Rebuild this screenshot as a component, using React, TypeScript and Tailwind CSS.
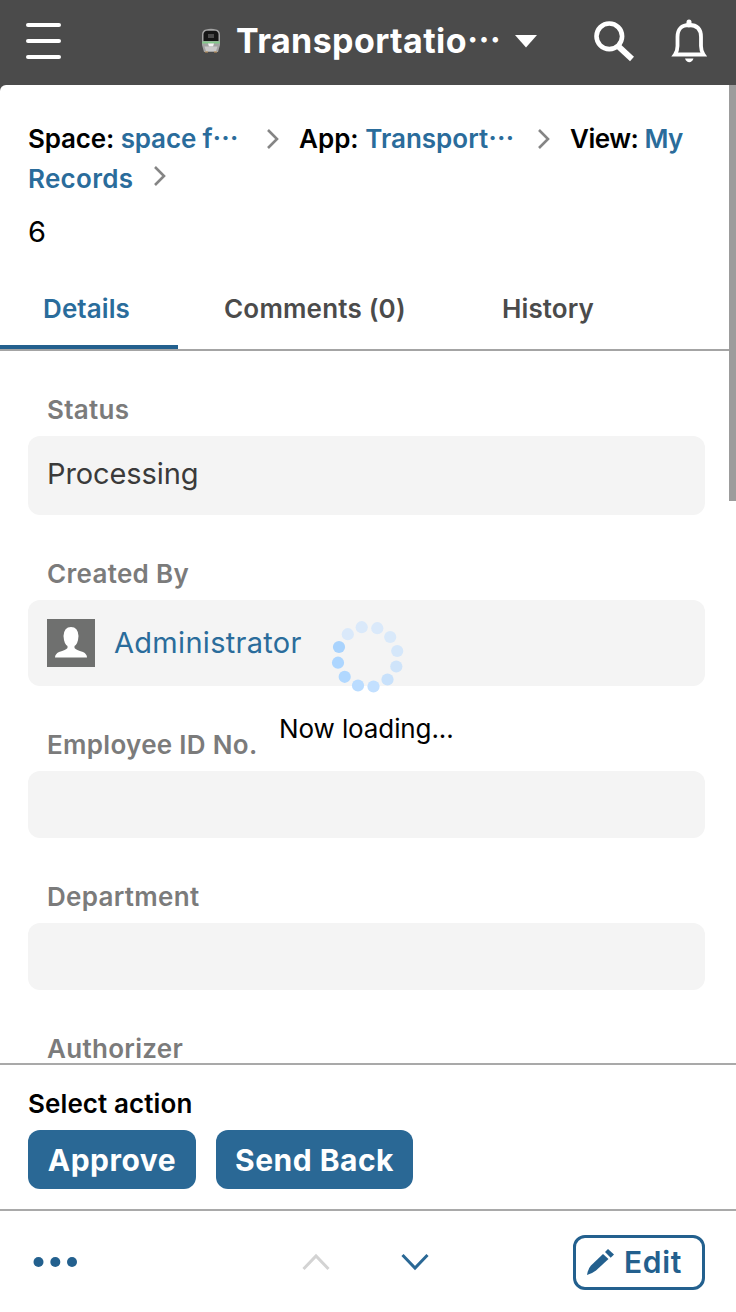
import type { ReactNode } from "react";

interface FieldProps {
      label: string;
      boxClass: string;
      children?: ReactNode;
}

// dot positions start at the brightest one and go counter-clockwise
const dots = [
      { x: 79, y: 47, color: "#a9d3fd" },
      { x: 78, y: 62.7, color: "#add6ff" },
      { x: 84.7, y: 76.8, color: "#b1d8ff" },
      { x: 98, y: 85.5, color: "#badcff" },
      { x: 113.5, y: 86.5, color: "#c3e0ff" },
      { x: 127.5, y: 79.5, color: "#c8e1fb" },
      { x: 136.3, y: 66.5, color: "#cfe4fa" },
      { x: 137.2, y: 51, color: "#d5e7fa" },
      { x: 130.2, y: 37, color: "#d9e9fa" },
      { x: 117.3, y: 28.2, color: "#dae9fa" },
      { x: 101.7, y: 27.2, color: "#dae9fa" },
      { x: 87.8, y: 34.2, color: "#dae9fa" },
];

const Ellipsis = () => (
      <span lang="ja" className="font-['Noto_Sans_CJK_JP',sans-serif] leading-none font-bold">
            …
      </span>
);

const TrainIcon = () => (
      <svg width="20" height="26" viewBox="0 0 20 26" className="shrink-0">
            <path d="M1 7Q1 2 5 1.5Q10 .2 15 1.5Q19 2 19 7V17L17 24H3L1 17Z" fill="#a3a3a3" />
            <path d="M2.5 6Q3 3 6 2.7H14Q17 3 17.5 6V13H2.5Z" fill="#151515" />
            <path d="M7 6H13V10H7Z" fill="#4a4a4a" />
            <path d="M1.2 13.5H18.8V15.5H1.2Z" fill="#83c98b" />
            <path d="M7 15.5H13L12 18.5H8Z" fill="#f4f4f4" />
            <path d="M3.5 18.5H16.5L15 23H5Z" fill="#c9c9c9" />
            <path d="M4 24H7M13 24H16" stroke="#c99a5f" strokeWidth="1.2" />
      </svg>
);

const Chevron = ({ className = "" }: { className?: string }) => (
      <svg width="14" height="22" viewBox="0 0 14 22" fill="none" className={`shrink-0 ${className}`}>
            <path d="M2 2L11 11L2 20" stroke="#858585" strokeWidth="2.6" />
      </svg>
);

const Field = ({ label, boxClass, children }: FieldProps) => (
      <div className="pt-10">
            <div className="mb-[7px] ml-[19px] h-[38px] text-[26px] leading-[38px] font-semibold tracking-[0.3px] text-[#7b7b7b]">
                  {label}
            </div>
            <div className={`flex rounded-xl bg-[#f4f4f4] px-[19px] ${boxClass}`}>{children}</div>
      </div>
);

const Header = () => (
      <header className="flex h-[85px] shrink-0 items-center bg-[#4b4b4b] text-white">
            <div className="mb-[3px] ml-[26px] flex flex-col gap-3">
                  <span className="h-1 w-[35px] rounded-sm bg-white" />
                  <span className="h-1 w-[35px] rounded-sm bg-white" />
                  <span className="h-1 w-[35px] rounded-sm bg-white" />
            </div>
            <div className="mb-1 ml-[140px] flex w-[336px] items-center">
                  <TrainIcon />
                  <h1 className="mt-px ml-[15px] w-[279px] text-[34px] leading-[50px] font-bold tracking-[0.4px] whitespace-nowrap">
                        Transportatio<Ellipsis />
                  </h1>
                  <svg width="22" height="13" viewBox="0 0 22 13" className="mt-0.5 shrink-0">
                        <path d="M0 0H22L11 12.5Z" fill="#fff" />
                  </svg>
            </div>
            <svg width="42" height="42" viewBox="0 0 42 42" fill="none" className="mb-0.5 ml-[56px]" stroke="#fff">
                  <circle cx="16.3" cy="15.3" r="12.8" strokeWidth="4.6" />
                  <path d="M25 25L39 38" strokeWidth="5.8" />
            </svg>
            <svg width="36" height="44" viewBox="0 0 36 44" fill="none" className="mb-[3px] ml-[36px]">
                  <path d="M18 3V6" stroke="#fff" strokeWidth="5" strokeLinecap="round" />
                  <path d="M6.5 27V18Q6.5 6 18.3 6Q30 6 30 18V27Q30 32 32.5 35.5H4Q6.5 32 6.5 27Z" stroke="#fff" strokeWidth="3.8" />
                  <path d="M14 39.5H22.5Q21 43.3 18.3 43.3Q15.5 43.3 14 39.5Z" fill="#fff" />
            </svg>
      </header>
);

const Breadcrumb = () => (
      <nav className="ml-7 flex h-[78px] flex-col text-[26px] leading-[39px] font-semibold whitespace-nowrap">
            <div className="flex h-[39px] items-center">
                  <div className="h-[39px] w-[238px] tracking-[-0.15px]">
                        Space: <span className="text-[#2a6c9b]">space f<Ellipsis /></span>
                  </div>
                  <Chevron />
                  <div className="ml-[19px] h-[39px] w-[238px]">
                        App: <span className="text-[#2a6c9b]">Transport<Ellipsis /></span>
                  </div>
                  <Chevron />
                  <div className="ml-[19px] h-[39px] tracking-[-0.5px]">
                        View: <span className="text-[#2a6c9b]">My</span>
                  </div>
            </div>
            <div className="flex h-[39px] items-center">
                  <span className="w-[125px] pt-px tracking-[0.3px] text-[#2a6c9b]">Records</span>
                  <Chevron className="mb-1" />
            </div>
      </nav>
);

const Tabs = () => (
      <div className="flex h-[82px] border-b-2 border-[#a4a4a4] text-[26px] leading-[80px] font-semibold tracking-[0.1px] whitespace-nowrap text-[#4b4b4b]">
            <div className="h-[80px] w-[178px] border-b-4 border-[#23608e] pl-[43px] text-[#2a6c9b]">
                  Details
            </div>
            <div className="w-[278px] pl-[46px] tracking-[0.2px]">Comments (0)</div>
            <div className="pl-[46px]">History</div>
      </div>
);

const Footer = () => (
      <footer className="flex h-[249px] shrink-0 flex-col bg-white">
            <div className="h-[146px] border-t-2 border-[#a9a9a9] px-7 pt-5">
                  <div className="h-[38px] text-[26px] leading-[38px] font-semibold tracking-[0.1px]">Select action</div>
                  <div className="mt-[7px] flex gap-5 text-[30px] font-bold tracking-[0.5px] whitespace-nowrap text-white">
                        <button className="h-[59px] w-[168px] rounded-xl bg-[#2a6895] pt-px">Approve</button>
                        <button className="h-[59px] w-[197px] rounded-xl bg-[#2a6895] pt-px">Send Back</button>
                  </div>
            </div>
            <div className="flex h-[103px] items-center border-t-2 border-[#a9a9a9] pt-px pl-[33px]">
                  <svg width="44" height="12" viewBox="0 0 44 12" fill="#23608e">
                        <circle cx="5.5" cy="6" r="5" />
                        <circle cx="22.3" cy="6" r="5" />
                        <circle cx="39" cy="6" r="5" />
                  </svg>
                  <svg width="28" height="18" viewBox="0 0 28 18" fill="none" className="ml-[225px]">
                        <path d="M1.5 16L14 3L26.5 16" stroke="#d3d3d3" strokeWidth="3" />
                  </svg>
                  <svg width="28" height="18" viewBox="0 0 28 18" fill="none" className="ml-[71px]">
                        <path d="M1.5 2L14 15L26.5 2" stroke="#2a6895" strokeWidth="3" />
                  </svg>
                  <button className="ml-[144px] flex h-[55px] w-[132px] items-center rounded-xl border-[3.5px] border-[#23608e] pl-[11px] text-[30px] font-semibold tracking-[0.7px] text-[#23608e]">
                        <svg width="27" height="26" viewBox="0 0 27 26" fill="#23608e">
                              <path d="M16 5L21.5 10L9 21.5Q6 24 0 26Q1 19.5 4 16.5Z" />
                              <path d="M18 3L21 0L27 5.5L23.7 8.7Z" />
                        </svg>
                        <span className="ml-[10px]">Edit</span>
                  </button>
            </div>
      </footer>
);

const Loading = () => (
      <div className="absolute top-[600px] left-[260px] w-[216px]">
            <svg width="216" height="100" viewBox="0 0 216 100">
                  {dots.map((d) => (
                        <circle key={`${d.x}-${d.y}`} cx={d.x} cy={d.y} r="6.1" fill={d.color} />
                  ))}
            </svg>
            <p className="mt-[10px] ml-[19px] text-[26px] leading-[38px] tracking-[-0.1px] whitespace-nowrap">
                  Now loading...
            </p>
      </div>
);

export default function App() {
      return (
            <div className="relative flex h-[1312px] w-[736px] flex-col overflow-hidden bg-[#4b4b4b] font-['Inter',sans-serif] text-black">
                  <Header />
                  <main className="min-h-0 flex-1 overflow-hidden rounded-tl-md bg-white pt-[34px]">
                        <Breadcrumb />
                        <p className="mt-4 ml-7 h-[38px] text-[29px] leading-[38px]">6</p>
                        <div className="mt-[18px]">
                              <Tabs />
                        </div>
                        <div className="mr-[31px] ml-7">
                              <Field label="Status" boxClass="h-[79px] items-center pb-1">
                                    <span className="text-[29px] tracking-[-0.1px] text-[#3a3a3a]">Processing</span>
                              </Field>
                              <Field label="Created By" boxClass="h-[86px] items-center">
                                    <svg width="48" height="48" viewBox="0 0 48 48" className="shrink-0">
                                          <path d="M0 0H48V48H0Z" fill="#6f706f" />
                                          <path
                                                d="M24 8Q31 8 31.5 17Q31 25 27.5 27V29Q29 31 36 33Q40 35 40 38.5H8Q8 35 12 33Q19 31 20.5 29V27Q17 25 16.5 17Q17 8 24 8Z"
                                                fill="#fff"
                                          />
                                    </svg>
                                    <span className="ml-[19px] text-[29px] tracking-[0.3px] text-[#2a6c9b]">Administrator</span>
                              </Field>
                              <Field label="Employee ID No." boxClass="h-[67px]" />
                              <Field label="Department" boxClass="h-[67px]" />
                              <Field label="Authorizer" boxClass="h-[67px]" />
                        </div>
                  </main>
                  <Footer />
                  <div className="absolute top-[85px] right-0 h-[416px] w-[7px] bg-[#9c9c9c]" />
                  <Loading />
            </div>
      );
}
